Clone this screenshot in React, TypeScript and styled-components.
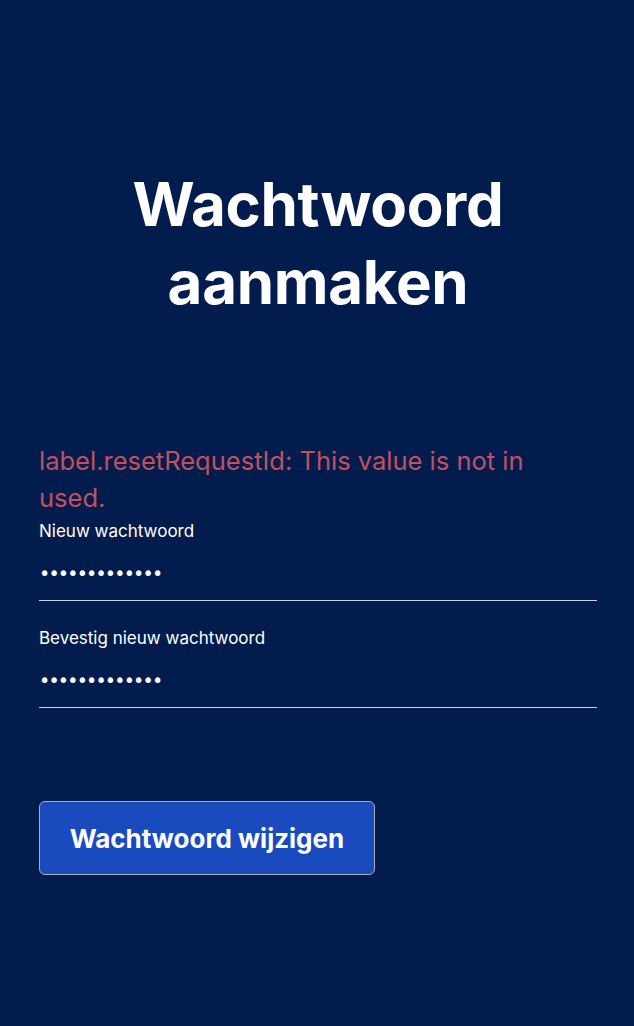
import styled, { createGlobalStyle } from "styled-components";

const GlobalStyle = createGlobalStyle`
  html, body {
    margin: 0;
    padding: 0;
    background-color: #011c4d;
  }
  body {
    font-family: "Inter", "Lato", sans-serif;
    color: #ffffff;
  }
`;

const Page = styled.div`
  min-height: 1026px;
  background-color: #011c4d;
  display: flex;
  flex-direction: column;
  padding: 165px 37px 0 39px;
  box-sizing: border-box;
`;

const Title = styled.h1`
  font-size: 60px;
  font-weight: 700;
  line-height: 78px;
  text-align: center;
  margin: 0 0 121px;
  letter-spacing: -0.3px;
`;

const ErrorText = styled.p`
  color: #c3505d;
  font-size: 25.5px;
  line-height: 37px;
  margin: 0 0 3px;
  max-width: 540px;
`;

const Field = styled.div`
  display: flex;
  flex-direction: column;
  margin-bottom: 25px;
`;

const Label = styled.label`
  font-size: 17px;
  line-height: 24px;
`;

const Input = styled.input`
  background: transparent;
  border: none;
  border-bottom: 1px solid #c9d1e0;
  color: #ffffff;
  font-family: "DejaVu Sans", sans-serif;
  font-size: 19px;
  line-height: 19px;
  letter-spacing: -1.8px;
  padding: 19px 0 16px;
  outline: none;
`;

const SubmitButton = styled.button`
  margin-top: 68px;
  align-self: flex-start;
  width: 336px;
  height: 74px;
  background-color: #1a4bbe;
  border: 1px solid #a8adb8;
  border-radius: 6px;
  color: #ffffff;
  font-family: "Inter", "Lato", sans-serif;
  font-size: 26px;
  font-weight: 700;
`;

export default function App() {
  return (
    <>
      <GlobalStyle />
      <Page>
        <Title>
          Wachtwoord
          <br />
          aanmaken
        </Title>
        <ErrorText>label.resetRequestId: This value is not in used.</ErrorText>
        <Field>
          <Label>Nieuw wachtwoord</Label>
          <Input type="password" defaultValue="wachtwoord123" readOnly />
        </Field>
        <Field>
          <Label>Bevestig nieuw wachtwoord</Label>
          <Input type="password" defaultValue="wachtwoord123" readOnly />
        </Field>
        <SubmitButton>Wachtwoord wijzigen</SubmitButton>
      </Page>
    </>
  );
}
